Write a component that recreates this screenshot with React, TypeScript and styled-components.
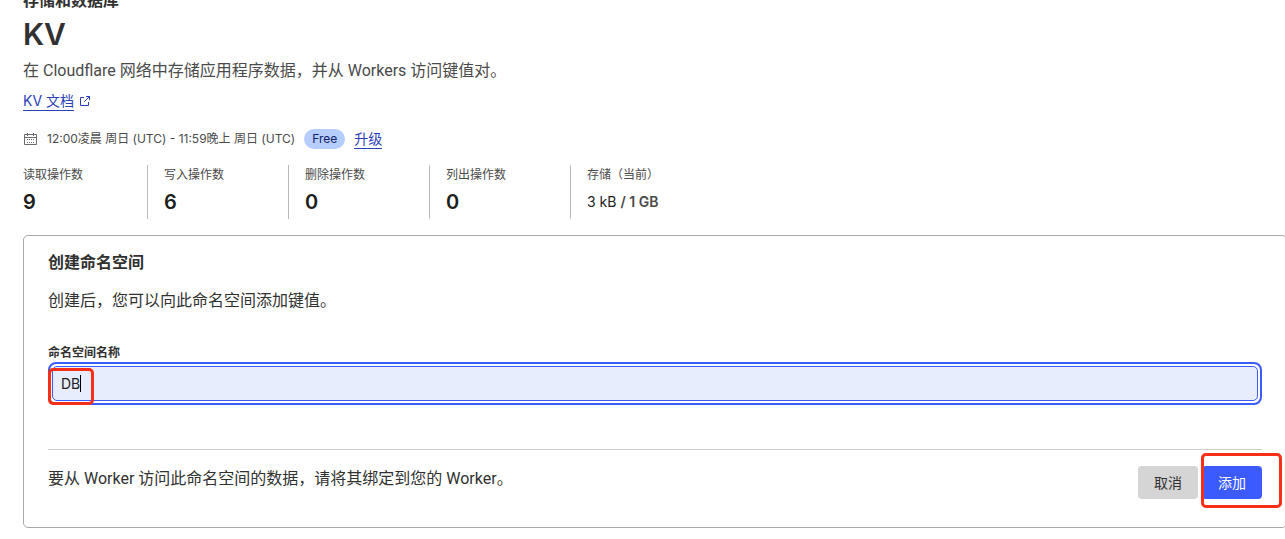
import React, { useState } from "react";
import styled, { createGlobalStyle } from "styled-components";

const GlobalStyle = createGlobalStyle`
  *, *::before, *::after { box-sizing: border-box; }
  body {
    margin: 0;
    overflow: hidden;
    background: #fff;
    color: #313131;
    font-family: Inter, "Noto Sans CJK SC", sans-serif;
    font-size: 16px;
    line-height: 24px;
  }
  h1, h2, p, dl, dt, dd { margin: 0; }
  button, input { font: inherit; }
`;

const proseFont = `Roboto, "Noto Sans CJK SC", sans-serif`;

const Page = styled.main`
  margin-top: -12px;
  padding-left: 23px;
`;

const Eyebrow = styled.p`
  font-weight: 600;
`;

const Title = styled.h1`
  margin-top: 2px;
  font-size: 30px;
  line-height: 40px;
  font-weight: 600;
`;

const Lead = styled.p`
  margin-top: 5px;
  font-family: ${proseFont};
  color: #4a4a4a;
`;

const DocsRow = styled.p`
  display: flex;
  margin-top: 8px;
  font-size: 14px;
  line-height: 20px;
`;

const DocsLink = styled.a`
  display: inline-flex;
  align-items: center;
  gap: 5px;
  color: #2c3fb8;
  text-decoration: none;
`;

const LinkText = styled.span`
  border-bottom: 1px solid #2c3fb8;
  line-height: 19px;
`;

const UsageRow = styled.div`
  display: flex;
  align-items: center;
  gap: 9px;
  margin-top: 18px;
  font-size: 12px;
  line-height: 20px;
  color: #4a4a4a;
`;

const Plan = styled.span`
  padding: 0 8px;
  border-radius: 10px;
  background: #b6cdff;
  color: #10216b;
`;

const UpgradeLink = styled.a`
  border-bottom: 1px solid #2c3fb8;
  color: #2c3fb8;
  font-size: 14px;
  line-height: 19px;
  text-decoration: none;
`;

const Stats = styled.dl`
  display: flex;
  margin-top: 16px;
`;

const Stat = styled.div`
  width: 141px;
  height: 54px;
  padding-left: 16px;
  border-left: 1px solid #b9b9b9;

  &:first-child {
    width: 124px;
    padding-left: 0;
    border-left: 0;
  }
`;

const StatLabel = styled.dt`
  font-size: 12px;
  line-height: 20px;
  color: #4a4a4a;
`;

const StatValue = styled.dd<{ $small?: boolean }>`
  margin-top: 5px;
  font-size: ${(p) => (p.$small ? 14 : 20)}px;
  line-height: 24px;
  font-weight: ${(p) => (p.$small ? 400 : 600)};
  color: #1d1d1d;

  b {
    font-weight: 600;
    color: #4a4a4a;
  }
`;

const Card = styled.form`
  margin: 16px -2px 0 0;
  padding: 14px 24px 28px;
  border: 1px solid #a9a9a9;
  border-radius: 5px;
`;

const CardTitle = styled.h2`
  font-size: 16px;
  line-height: 24px;
  font-weight: 600;
`;

const CardText = styled.p`
  margin-top: 15px;
  font-family: ${proseFont};
`;

const FieldLabel = styled.label`
  display: block;
  margin-top: 31px;
  font-size: 12px;
  line-height: 18px;
  font-weight: 600;
`;

const Field = styled.div`
  position: relative;
  padding: 2px;
  border: 2px solid #3b5bff;
  border-radius: 8px;
`;

const NameInput = styled.input`
  display: block;
  width: 100%;
  height: 35px;
  padding: 0 8px;
  border: 1px solid #3b5bff;
  border-radius: 5px;
  outline: none;
  background: #e7edfd;
  color: #1d1d1d;
  caret-color: transparent;
  font-size: 14px;
`;

const Caret = styled.span`
  position: absolute;
  top: 11px;
  left: 30px;
  width: 1px;
  height: 17px;
  background: #000;
`;

const Marker = styled.span<{ $inset: string; $width?: string }>`
  position: absolute;
  inset: ${(p) => p.$inset};
  width: ${(p) => p.$width ?? "auto"};
  border: 3px solid #f62f19;
  border-radius: 5px;
  pointer-events: none;
`;

const Footer = styled.div`
  display: flex;
  justify-content: space-between;
  align-items: flex-start;
  margin-top: 44px;
  padding-top: 16px;
  border-top: 1px solid #cfcfcf;
`;

const FooterText = styled.p`
  font-family: ${proseFont};
  line-height: 26px;
`;

const Actions = styled.div`
  display: flex;
  gap: 4px;
`;

const ActionWrap = styled.div`
  position: relative;
`;

const Button = styled.button<{ $primary?: boolean }>`
  display: block;
  height: 33px;
  padding: 0 16px;
  border: 0;
  border-radius: 4px;
  background: ${(p) => (p.$primary ? "#3b5bff" : "#d5d5d5")};
  color: ${(p) => (p.$primary ? "#fff" : "#313131")};
  font-size: 14px;
  line-height: 20px;
`;

const counters = [
  { label: "读取操作数", value: 9 },
  { label: "写入操作数", value: 6 },
  { label: "删除操作数", value: 0 },
  { label: "列出操作数", value: 0 },
];

function ExternalIcon() {
  return (
    <svg width="12" height="12" viewBox="0 0 12 12" fill="none" stroke="currentColor" aria-hidden="true">
      <path d="M5 2.5H1.5v8h8V7M7 1.5h3.5V5M10.5 1.5 5.2 6.8" />
    </svg>
  );
}

function CalendarIcon() {
  return (
    <svg width="15" height="16" viewBox="0 0 15 16" fill="none" stroke="#6b6b6b" aria-hidden="true">
      <path d="M1.5 3.5h12v10h-12zM1.5 6.5h12M4.5 2v3M10.5 2v3" />
      <path d="M4 8.5h7M4 11.5h7" strokeDasharray="1 1" />
    </svg>
  );
}

export default function App() {
  const [name, setName] = useState("DB");
  return (
    <>
      <GlobalStyle />
      <Page>
        <Eyebrow>存储和数据库</Eyebrow>
        <Title>KV</Title>
        <Lead>在 Cloudflare 网络中存储应用程序数据，并从 Workers 访问键值对。</Lead>
        <DocsRow>
          <DocsLink href="#docs">
            <LinkText>KV 文档</LinkText>
            <ExternalIcon />
          </DocsLink>
        </DocsRow>
        <UsageRow>
          <CalendarIcon />
          <span>12:00凌晨 周日 (UTC) - 11:59晚上 周日 (UTC)</span>
          <Plan>Free</Plan>
          <UpgradeLink href="#upgrade">升级</UpgradeLink>
        </UsageRow>
        <Stats>
          {counters.map((c) => (
            <Stat key={c.label}>
              <StatLabel>{c.label}</StatLabel>
              <StatValue>{c.value}</StatValue>
            </Stat>
          ))}
          <Stat>
            <StatLabel>存储（当前）</StatLabel>
            <StatValue $small>
              3 kB <b>/ 1 GB</b>
            </StatValue>
          </Stat>
        </Stats>
        <Card onSubmit={(e) => e.preventDefault()}>
          <CardTitle>创建命名空间</CardTitle>
          <CardText>创建后，您可以向此命名空间添加键值。</CardText>
          <FieldLabel htmlFor="namespace">命名空间名称</FieldLabel>
          <Field>
            <NameInput id="namespace" value={name} onChange={(e) => setName(e.target.value)} />
            <Caret />
            <Marker $inset="4px auto -2px -2px" $width="46px" />
          </Field>
          <Footer>
            <FooterText>要从 Worker 访问此命名空间的数据，请将其绑定到您的 Worker。</FooterText>
            <Actions>
              <Button type="button">取消</Button>
              <ActionWrap>
                <Button type="submit" $primary>
                  添加
                </Button>
                <Marker $inset="-13px -20px -9px -1px" />
              </ActionWrap>
            </Actions>
          </Footer>
        </Card>
      </Page>
    </>
  );
}
